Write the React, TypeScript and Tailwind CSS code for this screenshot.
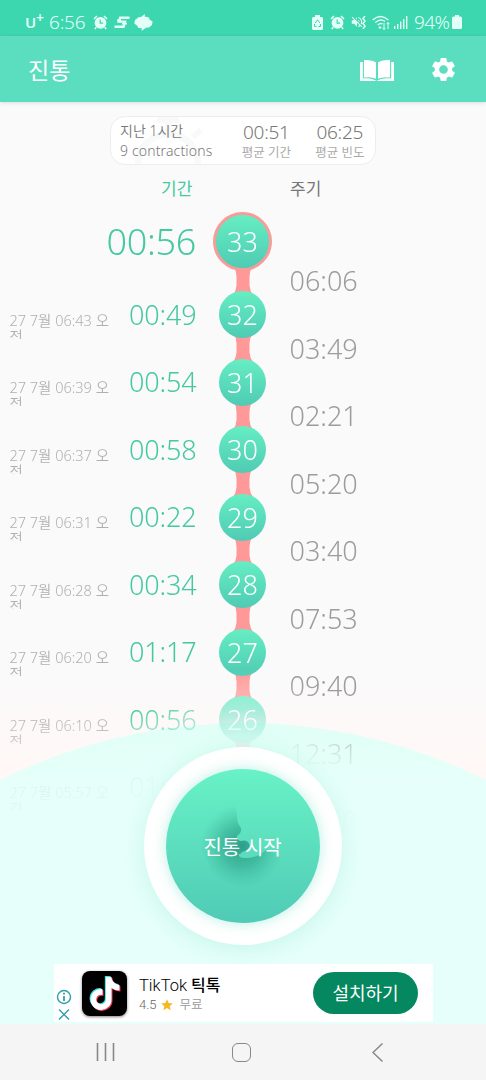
import { Fragment } from "react";
import { FaTiktok } from "react-icons/fa6";
import { MdSettings, MdStar, MdVolumeOff } from "react-icons/md";

const contractions = [
  { no: 32, date: "27 7월 06:43 오전", duration: "00:49" },
  { no: 31, date: "27 7월 06:39 오전", duration: "00:54" },
  { no: 30, date: "27 7월 06:37 오전", duration: "00:58" },
  { no: 29, date: "27 7월 06:31 오전", duration: "00:22" },
  { no: 28, date: "27 7월 06:28 오전", duration: "00:34" },
  { no: 27, date: "27 7월 06:20 오전", duration: "01:17" },
  { no: 26, date: "27 7월 06:10 오전", duration: "00:56" },
  { no: 25, date: "27 7월 05:57 오전", duration: "01:08" },
];

const intervals = [
  "06:06",
  "03:49",
  "02:21",
  "05:20",
  "03:40",
  "07:53",
  "09:40",
  "12:31",
  "07:50",
];

const AlarmIcon = () => (
  <svg className="w-[15px] h-[15px]" viewBox="0 0 15 15" fill="none" stroke="currentColor">
    <circle cx="7.5" cy="7.8" r="5.9" fill="currentColor" stroke="none" />
    <path d="M1 4 4 1M11 1l3 3M3.3 12.2 1.8 14M11.7 12.2l1.5 1.8" strokeWidth="1.6" />
    <path d="M7.2 4.6v3.6h3" stroke="#3cd6af" strokeWidth="1.2" />
  </svg>
);

const StatusBar = () => (
  <div className="h-9 shrink-0 bg-[#3cd6af] text-[#e3fff8] flex items-center justify-between pl-[25px] pr-[24px] pt-2">
    <div className="flex items-center">
      <span className="text-[15px] leading-none font-semibold w-[11px] pt-[1px]">U</span>
      <span className="text-[14px] leading-none font-semibold -mt-2 mr-[4px] w-[9px]">+</span>
      <span className="text-[19px] leading-none font-[350] w-[37px] mr-[7px] tracking-[-0.2px]">6:56</span>
      <AlarmIcon />
      <svg className="w-[16px] h-[13px] ml-[6px]" viewBox="0 0 16 13" fill="none" stroke="currentColor" strokeWidth="2.4">
        <path d="M15.5 1.8H6.2L4.8 5.6H11L9.6 10.8H0.5" />
        <path d="M3 4.2h4M8 7.6h5" strokeWidth="1.6" />
      </svg>
      <svg className="w-[19px] h-[17px] ml-[4px]" viewBox="0 0 19 17" fill="currentColor">
        <path d="M11 0 10.600 2.500 15 3.500 15.500 5.500 18.600 7.500 18 11 15 13.500 12 13.800 7.500 17 8 14.500 4 13.800 3.500 12 .3 9.500 1 6 4.500 3.200 7 3Z" />
      </svg>
    </div>
    <div className="flex items-center">
      <svg className="w-[11px] h-[15px] mr-[7px]" viewBox="0 0 11 15">
        <path d="M3 0h5v2h1.5Q11 2 11 3.5v10Q11 15 9.500 15h-8Q0 15 0 13.500v-10Q0 2 1.500 2H3Z" fill="currentColor" />
        <path d="M3.200 8 5.500 4.800 7.800 8M8.500 9v2.500H6.500M4.500 11.500h-2V9" fill="none" stroke="#3cd6af" strokeWidth="1" />
      </svg>
      <AlarmIcon />
      <div className="flex items-center ml-[5px] mr-[6px]">
        <MdVolumeOff className="w-[14px] h-[16px]" />
        <svg className="w-[4px] h-[13px] -ml-[2px]" viewBox="0 0 4 13" fill="none" stroke="currentColor" strokeWidth="1.500">
          <path d="M3 0 1 2.500 3 5 1 7.500 3 10 1 13" />
        </svg>
      </div>
      <svg className="w-[18px] h-[15px] mr-[4px]" viewBox="0 0 18 15" fill="none" stroke="currentColor" strokeWidth="1.4">
        <path d="M.7 5Q8.500-2 16.300 5M3.300 7.500Q8.500 3 13 6.500M5.700 10Q8.300 7.500 10.500 9" />
        <path d="M8 11.500v2" strokeWidth="2.500" />
        <path d="M12 8v6.500M10.500 12.800l1.500 1.700 1.500-1.700M16 14V7.500M14.500 9.200 16 7.500l1.500 1.700" strokeWidth="1" />
      </svg>
      <svg className="w-[14px] h-[13px] mr-[6px]" viewBox="0 0 14 13" fill="currentColor">
        <path d="M0 10h1.400v3H0zM3 8h1.400v5H3zM6 5.500h1.400V13H6zM9 3h1.400v10H9zM12 0h1.400v13H12z" />
      </svg>
      <span className="text-[19px] leading-none font-[350] w-[38px] tracking-[-0.600px]">94%</span>
      <svg className="w-[10px] h-[14px]" viewBox="0 0 10 14" fill="currentColor">
        <path d="M3 0h4v1.500h1.500Q10 1.500 10 3v9.500Q10 14 8.500 14h-7Q0 14 0 12.500V3Q0 1.500 1.500 1.500H3Z" />
      </svg>
    </div>
  </div>
);

const Header = () => (
  <header className="h-[66px] shrink-0 bg-[#5bdebf] text-white flex items-center pl-[28px] pr-[28px] shadow-[0_1px_4px_rgba(0,0,0,0.12)] z-10">
    <h1 className="flex-1 text-[23px] leading-none pt-[3px]">진통</h1>
    <svg className="w-[34px] h-[22px] mr-[35px] mt-[3px]" viewBox="0 0 34 22">
      <path d="M0 2h34v19H0z" fill="white" />
      <path d="M3.300 0v18Q11 17 16.500 20.500 22 17 30.700 18V0" fill="#5bdebf" stroke="#5bdebf" strokeWidth="1" />
      <path d="M4 0Q12-.3 16 2.200v16.500Q11.500 16.500 4 17.500ZM30 0Q22-.3 18 2.200v16.500q4.500-2.200 12-1.200Z" fill="white" />
      <path d="M17 2v18" stroke="#5bdebf" strokeWidth="1.600" />
    </svg>
    <MdSettings className="w-[29px] h-[29px] mt-[1px]" />
  </header>
);

const Summary = () => (
  <div className="relative w-[266px] h-[49px] ml-[110px] mt-[14px] rounded-[15px] bg-white border border-[#ededed] flex overflow-hidden text-[#777]">
    {/* stopwatch watermark */}
    <svg className="absolute left-[20px] top-0 w-[80px] h-[48px]" viewBox="0 0 80 48" fill="none" stroke="#f8f9f9">
      <path d="M26 3h22M37 3v12M62 20l8-7" strokeWidth="6" />
      <circle cx="37" cy="47" r="30" strokeWidth="7" />
    </svg>
    <div className="relative w-[121px] pl-[9px] pt-[4px] text-[14px] leading-[20px] whitespace-nowrap">
      <p className="font-[350]">지난 1시간</p>
      <p className="font-[350] tracking-[0.150px]">9 contractions</p>
    </div>
    <div className="relative w-[69px] text-center pt-[4px] pl-[2px]">
      <p className="text-[19px] leading-[23px] font-[350] tracking-[-0.300px]">00:51</p>
      <p className="text-[12.500px] leading-[18px] text-[#aaa]">평균 기간</p>
    </div>
    <div className="relative w-[76px] text-center pt-[4px] pl-[5px]">
      <p className="text-[19px] leading-[23px] font-[350] tracking-[-0.300px]">06:25</p>
      <p className="text-[12.500px] leading-[18px] text-[#aaa]">평균 빈도</p>
    </div>
  </div>
);

const Link = () => (
  <svg className="w-[24px] h-[20.500px] overflow-visible" viewBox="0 0 24 20.500">
    <path d="M2-4Q5-2 5.500 6V14.500Q5 20 2 24H22Q19 20 18.500 14.500V6Q19-2 22-4Z" fill="#ff9898" />
  </svg>
);

// the list fades out downwards and around the start button
const Timeline = () => (
  <div className="flex h-[640px] overflow-hidden [mask-composite:intersect] [mask-image:linear-gradient(to_bottom,black_505px,rgba(0,0,0,.6)_542px,rgba(0,0,0,.2)_565px,rgba(0,0,0,.12)_600px,transparent_630px),radial-gradient(circle_at_243px_641px,rgba(0,0,0,.2)_108px,rgba(0,0,0,.75)_150px,black_175px)]">
    <div className="w-[213px] shrink-0">
      <div className="h-[76.500px] flex items-center justify-end pr-[17px]">
        <span className="text-[36px] leading-none font-[350] tracking-[-0.300px] text-[#45c9a1]">00:56</span>
      </div>
      {contractions.map((c) => (
        <div key={c.no} className="h-[67.500px] flex items-center pl-[9.500px] pr-[16.500px]">
          <div className="w-[104px] h-[27px] mt-[22px] overflow-hidden text-[14.500px] leading-[16px] font-[350] text-[#b0b0b0] break-all">
            {c.date}
          </div>
          <span className="flex-1 text-right text-[27px] leading-none font-[350] tracking-[-0.150px] text-[#45c9a1]">
            {c.duration}
          </span>
        </div>
      ))}
    </div>
    <div className="w-[59px] shrink-0 flex flex-col items-center pt-[7.500px]">
      <div className="relative z-10 shrink-0 w-[59px] h-[59px] rounded-full border-[3px] border-[#f89c98] bg-linear-to-b from-[#66eec3] to-[#4fcbb4] flex items-center justify-center text-white text-[27px] leading-none font-[350]">
        33
      </div>
      {contractions.map((c) => (
        <Fragment key={c.no}>
          <Link />
          <div className="relative z-10 shrink-0 w-[47px] h-[47px] rounded-full bg-linear-to-b from-[#66eec3] to-[#4fcbb4] flex items-center justify-center text-white text-[27px] leading-none font-[350]">
            {c.no}
          </div>
        </Fragment>
      ))}
    </div>
    <div className="pl-[17.500px] pt-[43px]">
      {intervals.map((value) => (
        <div key={value} className="h-[67.500px] flex items-center text-[27px] leading-none font-[350] text-[#9c9c9c]">
          {value}
        </div>
      ))}
    </div>
  </div>
);

const StartButton = () => (
  <button className="absolute left-[143.500px] top-[644.500px] w-[198px] h-[198px] rounded-full bg-white p-[22px] shadow-[0_4px_24px_rgba(120,225,200,0.3)]">
    <span className="relative flex w-full h-full rounded-full items-center justify-center bg-linear-to-b from-[#68f2c6] to-[#50cbb6] text-white text-[20px] leading-none shadow-[0_0_14px_rgba(100,225,195,0.45)]">
      <svg className="absolute inset-0 w-full h-full" viewBox="0 0 154 154">
        <defs>
          <radialGradient id="body" gradientUnits="userSpaceOnUse" cx="76" cy="77" r="42">
            <stop offset="0" stopColor="#238c7b" stopOpacity="0.8" />
            <stop offset="0.5" stopColor="#2ba087" stopOpacity="0.5" />
            <stop offset="1" stopColor="#3db79c" stopOpacity="0" />
          </radialGradient>
        </defs>
        <path
          d="M64 33Q71 34 71 47 71 54 75 59 76 64 71 67 70 71 75 72 82 70 84 77 83 81 76 83 72 87 80 89 92 89 101 80 110 83 119 92 109 103 105 112 85 122 61 114 43 104 43 96 38 88 34 75 39 64 43 47 52 35 64 33Z"
          fill="url(#body)"
        />
        <path d="M73 85Q84 84 95 78 101 77 95 82 88 89 77 89 72 88 73 85Z" fill="#5bdcbe" />
      </svg>
      <span className="relative pt-[4px] tracking-[-0.200px]">진통 시작</span>
    </span>
  </button>
);

const AdBanner = () => (
  <div className="absolute left-[54px] bottom-[2px] w-[379px] h-[58px] bg-white flex items-center pl-[2px] pr-[15px]">
    <svg className="w-[16px] h-[32px] mt-[23px] shrink-0" viewBox="0 0 16 32" fill="none" stroke="#309eaa" strokeWidth="1.400">
      <circle cx="8" cy="8" r="6.500" />
      <path d="M8 7v5M8 3.800v1.700" strokeWidth="1.800" />
      <path d="M3 20.500 13 30.500M13 20.500 3 30.500" />
    </svg>
    <div className="relative shrink-0 w-[45px] h-[45px] ml-[10px] rounded-[8px] bg-black shadow-[0_1px_3px_rgba(0,0,0,0.5)]">
      <FaTiktok className="absolute left-[6px] top-[5px] w-[32px] h-[33px] text-[#35e6e4]" />
      <FaTiktok className="absolute left-[8px] top-[7px] w-[32px] h-[33px] text-[#ef3657]" />
      <FaTiktok className="absolute left-[7px] top-[6px] w-[32px] h-[33px] text-white" />
    </div>
    <div className="ml-[12px] flex-1 pt-[3px]">
      <p className="font-[Roboto,'Noto_Sans_CJK_KR',sans-serif] text-[16.500px] leading-[20px] font-[350] text-black">
        TikTok <span className="font-medium text-[16px]">틱톡</span>
      </p>
      <p className="font-[Roboto,'Noto_Sans_CJK_KR',sans-serif] flex items-center text-[13px] leading-[18px] font-[350] text-[#666]">
        4.5
        <MdStar className="w-[14px] h-[14px] text-[#f4b921] ml-[3px] mr-[6px]" />
        <span className="text-[12.500px] text-[#999]">무료</span>
      </p>
    </div>
    <button className="w-[105px] h-[42px] rounded-full bg-[#058760] text-white text-[18px] leading-none pb-[1px]">
      설치하기
    </button>
  </div>
);

const NavigationBar = () => (
  <div className="h-[56px] shrink-0 bg-[#f5f5f5] flex items-center pl-[96px]">
    <svg className="w-[19px] h-[18px]" viewBox="0 0 19 18" stroke="#888" strokeWidth="1.600">
      <path d="M1.500 0v18M9.500 0v18M17.500 0v18" />
    </svg>
    <div className="w-[19px] h-[19px] border-[1.500px] border-[#888] rounded-[6px] ml-[117px] mr-[121px]" />
    <svg className="w-[11px] h-[19px]" viewBox="0 0 11 19" fill="none" stroke="#888" strokeWidth="1.500">
      <path d="M10.500.5 1 9.500l9.500 9" />
    </svg>
  </div>
);

export default function App() {
  return (
    <div className="w-[486px] h-[1080px] overflow-hidden flex flex-col font-['Noto_Sans','Noto_Sans_CJK_KR',sans-serif]">
      <StatusBar />
      <Header />
      <main className="relative flex-1 min-h-0 overflow-hidden bg-linear-to-b from-[#fafafa] from-62% to-[#fff8f7] to-72%">
        <svg className="absolute inset-0 w-full h-full" viewBox="0 0 486 922">
          <defs>
            <linearGradient id="hill" x1="0" y1="0" x2="0" y2="1">
              <stop offset="0" stopColor="#e0fff6" />
              <stop offset="0.06" stopColor="#e7fffa" />
            </linearGradient>
          </defs>
          <circle cx="243" cy="1167" r="546" fill="url(#hill)" />
        </svg>
        <div className="relative">
          <Summary />
          <div className="h-[39px] flex items-center text-[17px] leading-none pt-[8px]">
            <span className="text-[#45c9a1] ml-[161px] w-[129px]">기간</span>
            <span className="text-[#777]">주기</span>
          </div>
          <Timeline />
        </div>
        <StartButton />
        <AdBanner />
      </main>
      <NavigationBar />
    </div>
  );
}
